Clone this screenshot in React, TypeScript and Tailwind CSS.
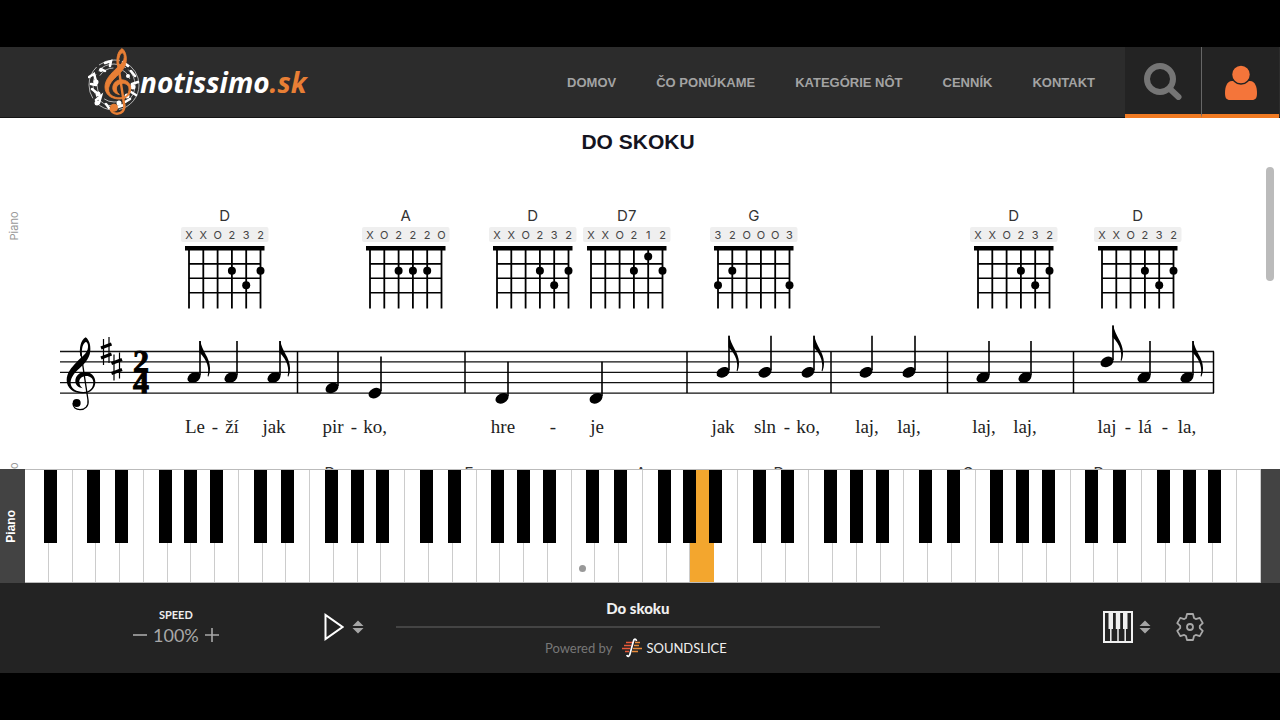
import { useState } from 'react';

const NAV_ITEMS = ['DOMOV', 'ČO PONÚKAME', 'KATEGÓRIE NÔT', 'CENNÍK', 'KONTAKT'];

const CHORDS = [
  { name: 'D', x: 189, frets: 'XXO232' },
  { name: 'A', x: 370, frets: 'XO222O' },
  { name: 'D', x: 497, frets: 'XXO232' },
  { name: 'D7', x: 591, frets: 'XXO212' },
  { name: 'G', x: 718, frets: '32OOO3' },
  { name: 'D', x: 978, frets: 'XXO232' },
  { name: 'D', x: 1102, frets: 'XXO232' },
];

const NEXT_CHORDS = [
  { name: 'D', x: 330 },
  { name: 'E', x: 469 },
  { name: 'A', x: 641 },
  { name: 'D', x: 779 },
  { name: 'G', x: 968 },
  { name: 'D', x: 1099 },
];

// step = half staff spaces below the top line
const NOTES = [
  { x: 194, step: 5, flag: true },
  { x: 231, step: 5 },
  { x: 274, step: 5, flag: true },
  { x: 332, step: 7 },
  { x: 375, step: 8 },
  { x: 502, step: 9 },
  { x: 596, step: 9 },
  { x: 723, step: 4, flag: true },
  { x: 765, step: 4 },
  { x: 808, step: 4, flag: true },
  { x: 866, step: 4 },
  { x: 909, step: 4 },
  { x: 983, step: 5 },
  { x: 1025, step: 5 },
  { x: 1107, step: 2, flag: true },
  { x: 1144, step: 5 },
  { x: 1187, step: 5, flag: true },
];

const BARLINES = [297.5, 465, 687, 831, 947.5, 1073.5, 1213.5];

const LYRICS: [string, number][] = [
  ['Le', 195], ['-', 215], ['ží', 232], ['jak', 274],
  ['pir', 333], ['-', 354], ['ko,', 375],
  ['hre', 503], ['-', 553], ['je', 597],
  ['jak', 723], ['sln', 765], ['-', 787], ['ko,', 808],
  ['laj,', 867], ['laj,', 909], ['laj,', 984], ['laj,', 1025],
  ['laj', 1107], ['-', 1128], ['lá', 1145], ['-', 1165], ['la,', 1187],
];

const STAFF_TOP = 185.5;
const STAFF_GAP = 10.4;
const STRING_GAP = 14.3;
const FRET_GAP = 14.4;

// the 52 white keys run from A0 to C8
const WHITE_KEYS = Array.from({ length: 52 }, (_, i) => 'ABCDEFG'[i % 7]);
const MIDDLE_C = 23;
const BLACK_KEY_OFFSET: Record<string, string> = {
  A: '-right-2',
  C: '-right-1',
  D: '-right-2',
  F: '-right-1',
  G: '-right-1.5',
};

const CLEF_BODY =
  'M121 108C117 85 122 60 137 52C148 60 152 75 151 92C149 118 128 136 113 150C98 164 91 178 92 190C93 207 110 216 130 216C150 216 160 203 160 187C160 174 148 167 137 168C125 169 117 177 118 187C119 197 123 201 128 205C112 202 106 193 106 183C106 168 118 156 134 156C153 156 166 168 166 186C166 205 152 220 128 220C98 220 80 203 80 180C80 158 95 142 108 128C125 110 143 100 144 82C145 72 141 66 137 66C129 70 124 85 126 108Z';

function Clef({ stem = 4 }: { stem?: number }) {
  return (
    <>
      <path d={CLEF_BODY} fill="currentColor" />
      <path
        d="M123 100L144 240C147 258 135 269 120 269C108 269 99 262 99 250"
        fill="none"
        stroke="currentColor"
        strokeWidth={stem}
      />
      <circle cx="110" cy="249" r="12" fill="currentColor" />
    </>
  );
}

function Logo() {
  return (
    <a href="#" className="flex items-center">
      <svg width="52" height="68" viewBox="1 1 52 68" aria-hidden="true">
        <g fill="none" stroke="#b5b5b5">
          <circle cx="27" cy="38" r="25" strokeWidth="1" strokeDasharray="34 3 22 5" />
          <circle cx="27" cy="38" r="21" strokeWidth="1" strokeDasharray="20 4 30 3" />
          <circle cx="27" cy="38" r="17" strokeWidth="1" strokeDasharray="16 5" />
        </g>
        <g fill="none" stroke="#fff" strokeWidth="2.5" strokeLinecap="round">
          <path d="M2 30L7 27L9 34M5 42L10 46M4 37L9 38M9 53L14 49L12 56M18 16L24 14L23 19M36 15L41 19M44 24L48 29M45 37L51 35M44 45L49 48M38 55L43 52M28 61L37 58M19 57L22 61M14 22L18 24" />
        </g>
        <g fill="#fff">
          <circle cx="9" cy="35" r="2.5" />
          <circle cx="11" cy="47" r="2.5" />
          <circle cx="14" cy="23" r="2" />
          <circle cx="41" cy="29" r="2" />
          <circle cx="46" cy="40" r="2.5" />
          <circle cx="40" cy="49" r="2.5" />
          <circle cx="32" cy="56" r="2.5" />
          <circle cx="10" cy="56" r="2.5" />
        </g>
        <g transform="translate(-6 -14) scale(0.3)" className="text-[#e87f35]">
          <g stroke="currentColor" strokeWidth="3">
            <Clef stem={8} />
          </g>
        </g>
      </svg>
      <span className="font-['Open_Sans',sans-serif] text-[28px] leading-9 font-bold text-white italic">
        notissimo<span className="text-[#e87f35]">.sk</span>
      </span>
    </a>
  );
}

function Header() {
  return (
    <header className="flex h-[71px] shrink-0 items-stretch justify-between border-b border-[#151515] bg-[#2c2c2c] pr-px pl-[88px]">
      <Logo />
      <div className="-mb-px flex">
        <nav className="flex items-center gap-10 pr-[30px]">
          {NAV_ITEMS.map((item) => (
            <a key={item} href="#" className="text-[13px] font-bold text-[#a3a3a3]">
              {item}
            </a>
          ))}
        </nav>
        <button
          type="button"
          aria-label="Hľadať"
          className="flex w-[77px] items-center justify-center border-r border-b-4 border-r-[#666] border-b-[#f07a22] bg-[#232323]"
        >
          <svg width="38" height="38" viewBox="0 0 38 38" fill="none" stroke="#757575">
            <circle cx="16" cy="17" r="13" strokeWidth="6" />
            <path d="M26 27L34.500 35" strokeWidth="6" strokeLinecap="round" />
          </svg>
        </button>
        <button
          type="button"
          aria-label="Účet"
          className="flex w-[77px] items-center justify-center border-b-4 border-[#f07a22] bg-[#232323] pt-1"
        >
          <svg width="34" height="36" viewBox="0 0 34 36" fill="#f4753a">
            <path d="M8 16C3 16 1 22 1 28C1 33 2.500 35 6 35H28C31.500 35 33 33 33 28C33 22 31 16 26 16Z" />
            <circle cx="17" cy="9.500" r="9.500" stroke="#232323" strokeWidth="1.500" />
          </svg>
        </button>
      </div>
    </header>
  );
}

function ChordDiagram({ name, x, frets }: { name: string; x: number; frets: string }) {
  const width = STRING_GAP * 5;
  return (
    <g transform={`translate(${x} 0)`}>
      <text x={width / 2} y="55" fontSize="15" textAnchor="middle" fill="#333">
        {name}
      </text>
      <rect x="-8" y="61" width={width + 16} height="15" rx="2" fill="#efefef" />
      {frets.split('').map((fret, i) => (
        <text key={i} x={i * STRING_GAP} y="73" fontSize="11" textAnchor="middle" fill="#444">
          {fret}
        </text>
      ))}
      <rect x="-4" y="80" width={width + 8} height="4.500" />
      {frets.split('').map((_, i) => (
        <path key={i} d={`M${i * STRING_GAP} 82V142.500`} stroke="#000" strokeWidth="1.800" />
      ))}
      {[1, 2, 3].map((n) => (
        <path key={n} d={`M0 ${83.5 + n * FRET_GAP}H${width}`} stroke="#000" strokeWidth="1.600" />
      ))}
      {frets.split('').map((fret, i) =>
        Number(fret) > 0 ? (
          <circle key={i} cx={i * STRING_GAP} cy={76 + Number(fret) * FRET_GAP} r="4" />
        ) : null
      )}
    </g>
  );
}

function Note({ x, step, flag }: { x: number; step: number; flag?: boolean }) {
  return (
    <g transform={`translate(${x} ${STAFF_TOP + (step * STAFF_GAP) / 2})`}>
      <ellipse rx="6.800" ry="4.900" transform="rotate(-26)" />
      <path d="M6 -2V-36.500" stroke="#000" strokeWidth="1.600" />
      {flag && (
        <path d="M5.500 -36.500H6.500C7.500 -27 16 -20 16 -9.500C16 -6 15.400 -3.500 14.500 -1L13.600 -1.300C15.500 -9 13.500 -17 5.500 -25Z" />
      )}
    </g>
  );
}

function Sharp({ x, y }: { x: number; y: number }) {
  return (
    <g transform={`translate(${x} ${y})`} stroke="#000">
      <path d="M2.500 2V28M8 0V26" strokeWidth="1.200" />
      <path d="M0 11L10.500 7M0 21L10.500 17" strokeWidth="3.200" />
    </g>
  );
}

function Score() {
  return (
    <svg
      viewBox="0 0 1280 330"
      className="w-full shrink-0 font-['Inter',sans-serif]"
      role="img"
      aria-label="Do skoku"
    >
      {[60, 311].map((y) => (
        <text key={y} transform={`translate(18 ${y}) rotate(-90)`} fontSize="11" textAnchor="middle" fill="#999">
          Piano
        </text>
      ))}
      {CHORDS.map((chord) => (
        <ChordDiagram key={chord.x} {...chord} />
      ))}

      {[0, 1, 2, 3, 4].map((line) => (
        <path key={line} d={`M60 ${STAFF_TOP + line * STAFF_GAP}H1214`} stroke="#111" strokeWidth="1.300" />
      ))}
      {BARLINES.map((x) => (
        <path key={x} d={`M${x} ${STAFF_TOP}V${STAFF_TOP + STAFF_GAP * 4}`} stroke="#000" strokeWidth="1.500" />
      ))}

      <g transform="translate(40 154) scale(0.3333)">
        <Clef />
      </g>
      <Sharp x={101} y={171} />
      <Sharp x={111.5} y={186.5} />
      <g fontFamily="Liberation Serif, serif" fontWeight="bold" fontSize="32" textAnchor="middle" stroke="#000">
        <text x="141" y="206">2</text>
        <text x="141" y="227">4</text>
      </g>
      {NOTES.map((note) => (
        <Note key={note.x} {...note} />
      ))}

      <g fontFamily="Liberation Serif, serif" fontSize="19" textAnchor="middle" fill="#222">
        {LYRICS.map(([text, x]) => (
          <text key={x} x={x} y="267">
            {text}
          </text>
        ))}
      </g>

      {NEXT_CHORDS.map(({ name, x }) => (
        <text key={x} x={x} y="312" fontSize="15" textAnchor="middle" fill="#333">
          {name}
        </text>
      ))}
    </svg>
  );
}

function Keyboard({ active }: { active: number }) {
  return (
    <section className="flex h-[114px] shrink-0 bg-[#434343]">
      <div className="flex w-[25px] items-center justify-center">
        <span className="rotate-180 pl-1 text-xs font-semibold text-white [writing-mode:vertical-rl]">Piano</span>
      </div>
      <div className="flex flex-1 border-y border-[#bbb] bg-white">
        {WHITE_KEYS.map((name, i) => (
          <div key={i} className="relative flex-1">
            <button
              type="button"
              aria-label={name}
              className={`flex h-full w-full items-end justify-center border-r pb-2.5 ${
                i === active ? 'border-[#f3a62e] bg-[#f3a62e]' : 'border-[#ccc]'
              }`}
            >
              {i === MIDDLE_C && <span className="size-[7px] rounded-full bg-[#999]" />}
            </button>
            {BLACK_KEY_OFFSET[name] && i < 51 && (
              <button
                type="button"
                aria-label={`${name}#`}
                className={`absolute top-0 z-10 h-[73px] w-[13px] bg-black ${BLACK_KEY_OFFSET[name]}`}
              />
            )}
          </div>
        ))}
      </div>
      <div className="w-[19px]" />
    </section>
  );
}

function UpDown() {
  return (
    <svg width="12" height="14" viewBox="0 0 12 14" fill="#a5a5a5" aria-hidden="true">
      <path d="M6 0.500L11.500 6H0.500ZM6 13.500L11.500 8H0.500Z" />
    </svg>
  );
}

function Gear() {
  const points = [0, 60, 120, 180, 240, 300].flatMap((deg) => {
    const a = (deg * Math.PI) / 180;
    return [[-4, -9], [-3, -13], [3, -13], [4, -9]].map(
      ([x, y]) => `${x * Math.cos(a) - y * Math.sin(a)},${x * Math.sin(a) + y * Math.cos(a)}`
    );
  });
  return (
    <svg width="30" height="30" viewBox="-15 -15 30 30" fill="none" stroke="#a8a8a8" strokeWidth="1.800" strokeLinejoin="round">
      <polygon points={points.join(' ')} />
      <circle r="3" />
    </svg>
  );
}

function Player() {
  const [speed, setSpeed] = useState(100);
  return (
    <footer className="flex h-[90px] shrink-0 items-center bg-[#232323] pr-[75px] pb-[3px] pl-[133px] font-['Lato',sans-serif]">
      <div className="flex flex-col items-center">
        <span className="text-[11px] leading-4 font-bold text-[#eee]">SPEED</span>
        <div className="flex items-center gap-1.5 text-[#a8a8a8]">
          <button type="button" aria-label="Slower" onClick={() => setSpeed(speed - 5)}>
            <svg width="14" height="14" viewBox="0 0 14 14" stroke="currentColor" strokeWidth="1.600">
              <path d="M0 7H14" />
            </svg>
          </button>
          <span className="text-lg leading-6">{speed}%</span>
          <button type="button" aria-label="Faster" onClick={() => setSpeed(speed + 5)}>
            <svg width="14" height="14" viewBox="0 0 14 14" stroke="currentColor" strokeWidth="1.600">
              <path d="M0 7H14M7 0V14" />
            </svg>
          </button>
        </div>
      </div>

      <div className="ml-[105px] flex items-center gap-2">
        <button type="button" aria-label="Play">
          <svg width="20" height="28" viewBox="0 0 20 28" fill="none" stroke="#fff" strokeWidth="2">
            <path d="M1.500 2V26L18.500 14Z" />
          </svg>
        </button>
        <button type="button" aria-label="Play options">
          <UpDown />
        </button>
      </div>

      <div className="mx-8 flex flex-1 flex-col items-center pt-1">
        <h2 className="text-[15px] leading-6 font-black text-[#f0f0f0]">Do skoku</h2>
        <input
          type="range"
          aria-label="Position"
          defaultValue={0}
          className="my-[6px] h-0.5 w-full appearance-none bg-[#444] [&::-webkit-slider-thumb]:opacity-0"
        />
        <a href="#" className="flex items-center pr-1 text-[13px] leading-7 text-[#777]">
          Powered by
          <svg width="20" height="20" viewBox="0 0 20 20" fill="none" className="mr-1 ml-2.5" aria-hidden="true">
            <path d="M4 4.500H11M2 7.500H9M0 10.500H8M3 13.500H7" stroke="#e8593a" strokeWidth="1.500" />
            <path d="M13 4.500H18M12 7.500H17M11 10.500H20M10 13.500H16" stroke="#e88a3a" strokeWidth="1.500" />
            <path d="M14.500 3C14 0.500 12 0.500 11.300 3.500L8 16C7.300 19 5.500 19 4.800 17" stroke="#fff" strokeWidth="1.700" />
          </svg>
          <span className="text-[#f0f0f0]">SOUNDSLICE</span>
        </a>
      </div>

      <div className="ml-[191px] flex items-center gap-1.5">
        <button type="button" aria-label="Instruments">
          <svg width="30" height="32" viewBox="0 0 30 32" aria-hidden="true">
            <rect x="1" y="1" width="28" height="30" fill="#232323" stroke="#f0f0f0" strokeWidth="2" />
            <path d="M5.500 2H10V18H5.500ZM12.800 2H17.200V18H12.800ZM20 2H24.500V18H20Z" fill="#f0f0f0" />
            <path d="M7.800 18V30M15 18V30M22.200 18V30" stroke="#f0f0f0" strokeWidth="1.500" />
          </svg>
        </button>
        <button type="button" aria-label="Instrument options">
          <UpDown />
        </button>
      </div>
      <button type="button" aria-label="Settings" className="ml-6">
        <Gear />
      </button>
    </footer>
  );
}

export default function App() {
  return (
    <div className="flex h-screen flex-col bg-black py-[47px] font-['Liberation_Sans',Arial,sans-serif]">
      <Header />
      <main className="flex min-h-0 flex-1 flex-col bg-white">
        <h1 className="shrink-0 pr-1 text-center text-[21px] leading-[48px] font-bold text-[#14141f]">DO SKOKU</h1>
        <div className="relative flex min-h-0 flex-1 flex-col overflow-hidden">
          <Score />
          <div className="absolute top-px right-1.5 h-[114px] w-2 rounded-full bg-[#bbb]" />
        </div>
      </main>
      <Keyboard active={28} />
      <Player />
    </div>
  );
}
